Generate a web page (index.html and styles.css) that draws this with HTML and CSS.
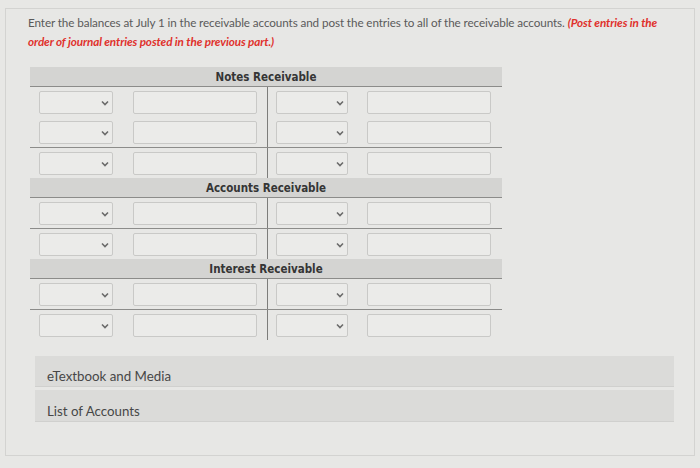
FILE: index.html
```html
<!DOCTYPE html>
<html lang="en">
<head>
<meta charset="utf-8">
<title>Receivable accounts</title>
<link rel="stylesheet" href="styles.css">
</head>
<body>
<div class="panel">
  <p class="intro">Enter the balances at July 1 in the receivable accounts and post the entries to all of the receivable accounts. <em class="note">(Post entries in the</em><br><em class="note">order of journal entries posted in the previous part.)</em></p>

  <div class="taccount">
    <div class="t-head">Notes Receivable</div>
    <div class="t-row">
      <div class="side left"><span class="sel"><svg class="chev" viewBox="0 0 8 6"><path d="M1 1.5 4 4.5 7 1.5"/></svg></span><span class="amt"></span></div>
      <div class="side right"><span class="sel"><svg class="chev" viewBox="0 0 8 6"><path d="M1 1.5 4 4.5 7 1.5"/></svg></span><span class="amt"></span></div>
    </div>
    <div class="t-row">
      <div class="side left"><span class="sel"><svg class="chev" viewBox="0 0 8 6"><path d="M1 1.5 4 4.5 7 1.5"/></svg></span><span class="amt"></span></div>
      <div class="side right"><span class="sel"><svg class="chev" viewBox="0 0 8 6"><path d="M1 1.5 4 4.5 7 1.5"/></svg></span><span class="amt"></span></div>
    </div>
    <div class="t-row total">
      <div class="side left"><span class="sel"><svg class="chev" viewBox="0 0 8 6"><path d="M1 1.5 4 4.5 7 1.5"/></svg></span><span class="amt"></span></div>
      <div class="side right"><span class="sel"><svg class="chev" viewBox="0 0 8 6"><path d="M1 1.5 4 4.5 7 1.5"/></svg></span><span class="amt"></span></div>
    </div>

    <div class="t-head">Accounts Receivable</div>
    <div class="t-row">
      <div class="side left"><span class="sel"><svg class="chev" viewBox="0 0 8 6"><path d="M1 1.5 4 4.5 7 1.5"/></svg></span><span class="amt"></span></div>
      <div class="side right"><span class="sel"><svg class="chev" viewBox="0 0 8 6"><path d="M1 1.5 4 4.5 7 1.5"/></svg></span><span class="amt"></span></div>
    </div>
    <div class="t-row total">
      <div class="side left"><span class="sel"><svg class="chev" viewBox="0 0 8 6"><path d="M1 1.5 4 4.5 7 1.5"/></svg></span><span class="amt"></span></div>
      <div class="side right"><span class="sel"><svg class="chev" viewBox="0 0 8 6"><path d="M1 1.5 4 4.5 7 1.5"/></svg></span><span class="amt"></span></div>
    </div>

    <div class="t-head">Interest Receivable</div>
    <div class="t-row">
      <div class="side left"><span class="sel"><svg class="chev" viewBox="0 0 8 6"><path d="M1 1.5 4 4.5 7 1.5"/></svg></span><span class="amt"></span></div>
      <div class="side right"><span class="sel"><svg class="chev" viewBox="0 0 8 6"><path d="M1 1.5 4 4.5 7 1.5"/></svg></span><span class="amt"></span></div>
    </div>
    <div class="t-row total">
      <div class="side left"><span class="sel"><svg class="chev" viewBox="0 0 8 6"><path d="M1 1.5 4 4.5 7 1.5"/></svg></span><span class="amt"></span></div>
      <div class="side right"><span class="sel"><svg class="chev" viewBox="0 0 8 6"><path d="M1 1.5 4 4.5 7 1.5"/></svg></span><span class="amt"></span></div>
    </div>
  </div>

  <div class="links">
    <div class="link-bar">eTextbook and Media</div>
    <div class="link-bar">List of Accounts</div>
  </div>
</div>
</body>
</html>
```

FILE: styles.css
```css
html, body {
  margin: 0;
  padding: 0;
}

body {
  background: #e7e7e5;
  font-family: Lato, "Open Sans", Arial, sans-serif;
  color: #555;
}

.panel {
  margin: 8px 5px 0 5px;
  height: 448px;
  border: 1px solid #d3d3d1;
  box-sizing: border-box;
}

.intro {
  margin: 0;
  padding: 4px 20px 0 22px;
  font-size: 11.7px;
  line-height: 19px;
  color: #5a5a5a;
  letter-spacing: -0.1px;
}

.note {
  color: #e0312c;
  font-weight: bold;
  font-style: italic;
}

.taccount {
  width: 472px;
  margin: 16px 0 0 24px;
}

.t-head {
  height: 19px;
  line-height: 20px;
  background: #d4d4d2;
  border-bottom: 1px solid #8c8c8a;
  text-align: center;
  font-family: "DejaVu Sans Condensed", "DejaVu Sans", sans-serif;
  font-weight: bold;
  font-size: 11.5px;
  color: #353535;
}

.t-row {
  display: flex;
}

.t-row.total {
  border-top: 1px solid #8c8c8a;
}

.side {
  display: flex;
  align-items: flex-start;
  height: 30px;
  box-sizing: border-box;
  padding-top: 4px;
}

.side.left {
  width: 238px;
  padding-left: 9px;
  gap: 20px;
  border-right: 1px solid #7d7d7b;
}

.side.right {
  width: 233px;
  padding-left: 8px;
  gap: 19px;
}

.sel,
.amt {
  display: flex;
  align-items: center;
  justify-content: flex-end;
  height: 23px;
  box-sizing: border-box;
  border: 1px solid #c9c9c7;
  border-radius: 2px;
  background: #ebebe9;
}

.left .sel {
  width: 74px;
}

.right .sel {
  width: 72px;
}

.amt {
  width: 124px;
}

.chev {
  width: 8px;
  height: 6px;
  margin-right: 3px;
  fill: none;
  stroke: #6a6a6a;
  stroke-width: 1.6;
}

.links {
  display: flex;
  flex-direction: column;
  gap: 3px;
  margin: 16px 0 0 29px;
  width: 639px;
}

.link-bar {
  height: 31px;
  box-sizing: border-box;
  padding: 12px 0 0 12px;
  line-height: 16px;
  background: #dbdbd9;
  border-bottom: 1px solid #d0d0ce;
  font-size: 13.3px;
  color: #474747;
}

.link-bar + .link-bar {
  height: 32px;
  padding-top: 13px;
}
```
